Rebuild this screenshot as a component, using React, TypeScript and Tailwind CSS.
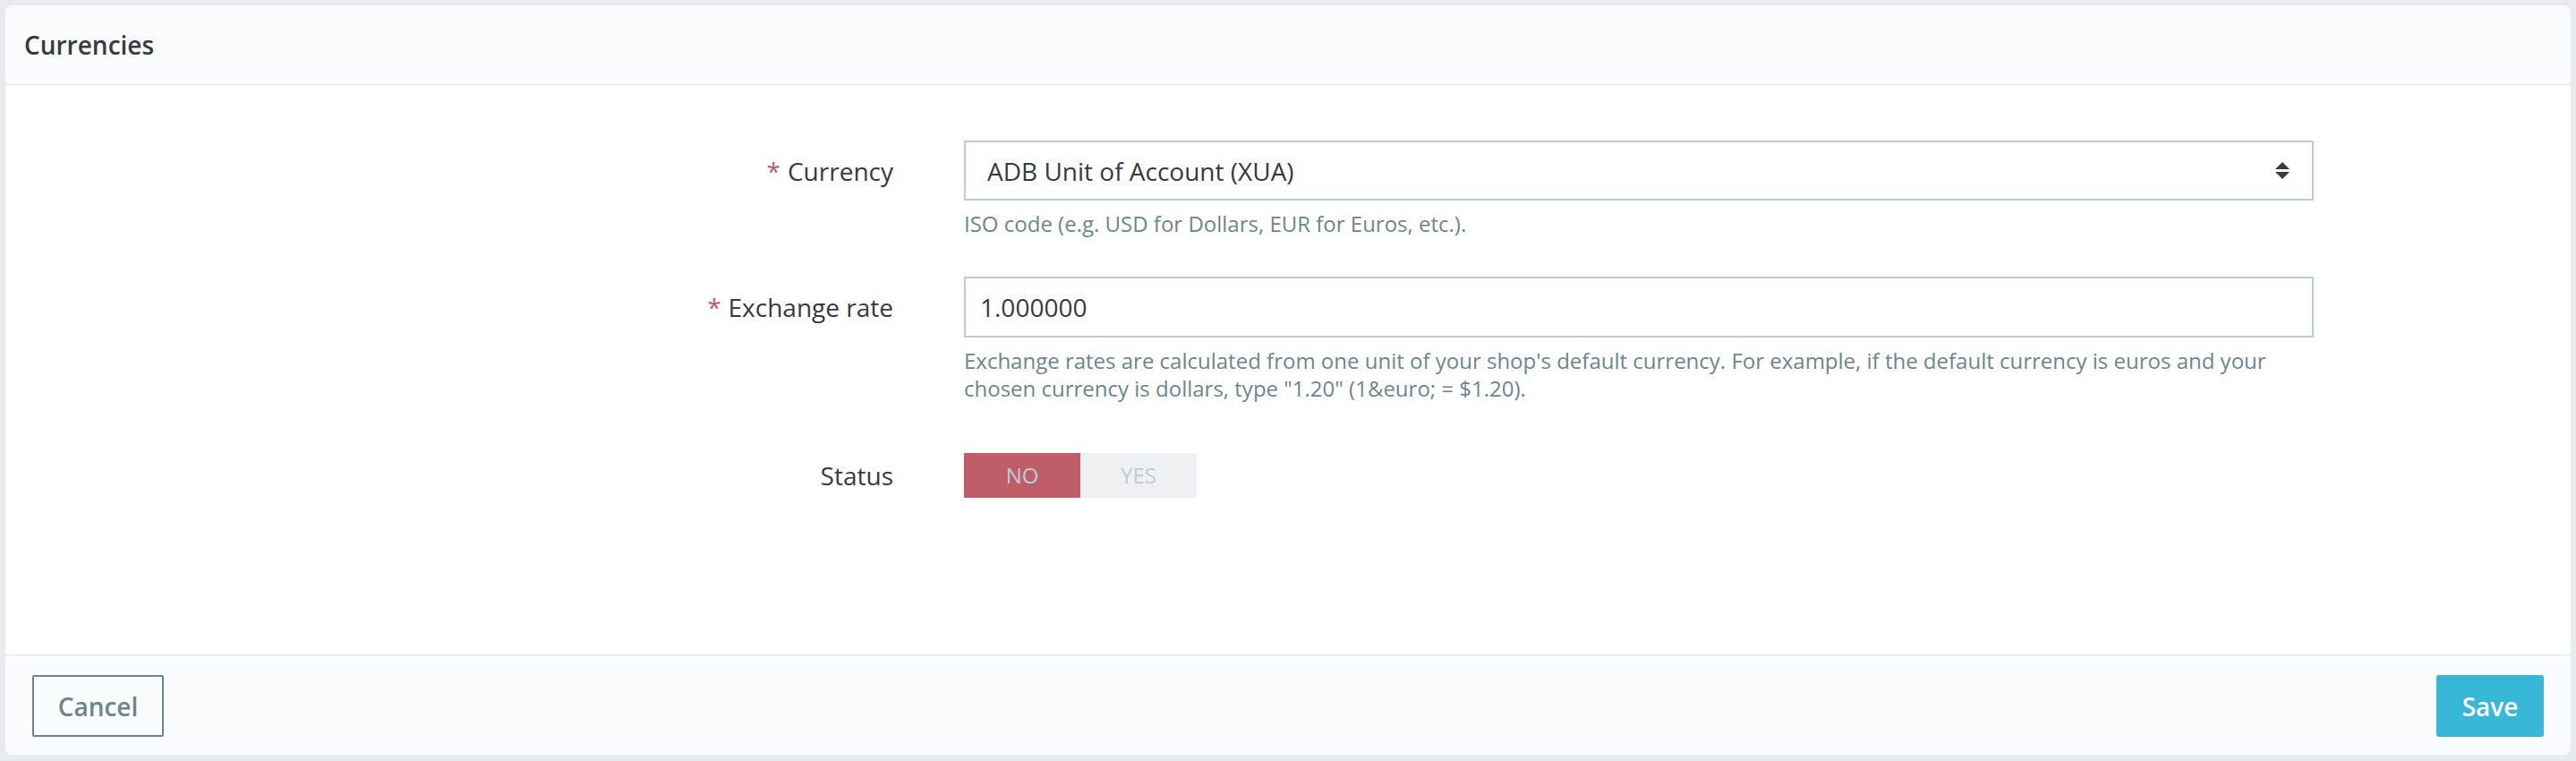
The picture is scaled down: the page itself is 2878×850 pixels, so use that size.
import React from "react";

function Req() {
  return <span className="text-[#c05c67] mr-[8px]">*</span>;
}

export default function App() {
  return (
    <div
      className="w-[2878px] h-[850px] bg-[#e8ebed] pt-[6px] px-[6px]"
      style={{ fontFamily: '"Open Sans", "Liberation Sans", sans-serif' }}
    >
      <div className="h-[837px] rounded-[8px] bg-white overflow-hidden flex flex-col">
        <div className="h-[89px] shrink-0 border-b border-[#dbe4e8] bg-[#fafbfc] flex items-center pl-[21px] text-[28px] font-semibold text-[#363a41]">
          Currencies
        </div>
        <div className="h-[636px] shrink-0 bg-white pt-[62px] text-[#363a41]">
          {/* Row 1 */}
          <div className="flex">
            <div className="w-[992px] h-[67px] flex items-center justify-end text-[28px]">
              <Req />
              Currency
            </div>
            <div className="ml-[79px] w-[1508px]">
              <div className="h-[67px] border-2 border-[#bbcdd2] flex items-center justify-between pl-[24px] pr-[25px] text-[28px]">
                <span>ADB Unit of Account (XUA)</span>
                <svg width="16" height="20" viewBox="0 0 16 20" fill="#363a41">
                  <polygon points="0,8 8,0 16,8" />
                  <polygon points="0,11 16,11 8,19" />
                </svg>
              </div>
              <div className="mt-[10px] text-[24px] leading-[31px] text-[#6c868e]">
                ISO code (e.g. USD for Dollars, EUR for Euros, etc.).
              </div>
            </div>
          </div>
          {/* Row 2 */}
          <div className="flex mt-[44px]">
            <div className="w-[992px] h-[68px] flex items-center justify-end text-[28px]">
              <Req />
              Exchange rate
            </div>
            <div className="ml-[79px] w-[1508px]">
              <div className="h-[68px] border-2 border-[#bbcdd2] flex items-center pl-[16px] text-[28px]">
                1.000000
              </div>
              <div className="mt-[10px] text-[24px] leading-[31px] text-[#6c868e] pr-[40px]">
                Exchange rates are calculated from one unit of your shop's default currency. For example, if the default currency is euros and your chosen currency is dollars, type "1.20" (1&amp;euro; = $1.20).
              </div>
            </div>
          </div>
          {/* Row 3 */}
          <div className="flex mt-[57px]">
            <div className="w-[992px] h-[50px] flex items-center justify-end text-[28px]">
              Status
            </div>
            <div className="ml-[79px] flex h-[50px] text-[24px]">
              <div className="w-[130px] h-[50px] bg-[#bf5d69] text-[#bccdd2] flex items-center justify-center">
                NO
              </div>
              <div className="w-[130px] h-[50px] bg-[#eef0f1] text-[#bccdd2] flex items-center justify-center rounded-r-[2px]">
                YES
              </div>
            </div>
          </div>
        </div>
        <div className="h-[112px] shrink-0 border-t border-[#dbe4e8] bg-[#fafbfc] px-[30px] pt-[22px] flex justify-between items-start">
          <button className="w-[147px] h-[69px] border-2 border-[#6c868e] rounded-[2px] text-[28px] font-semibold text-[#6c868e] flex items-center justify-center">
            Cancel
          </button>
          <button className="w-[120px] h-[69px] bg-[#38b8d6] rounded-[3px] text-[28px] font-semibold text-white flex items-center justify-center">
            Save
          </button>
        </div>
      </div>
    </div>
  );
}
